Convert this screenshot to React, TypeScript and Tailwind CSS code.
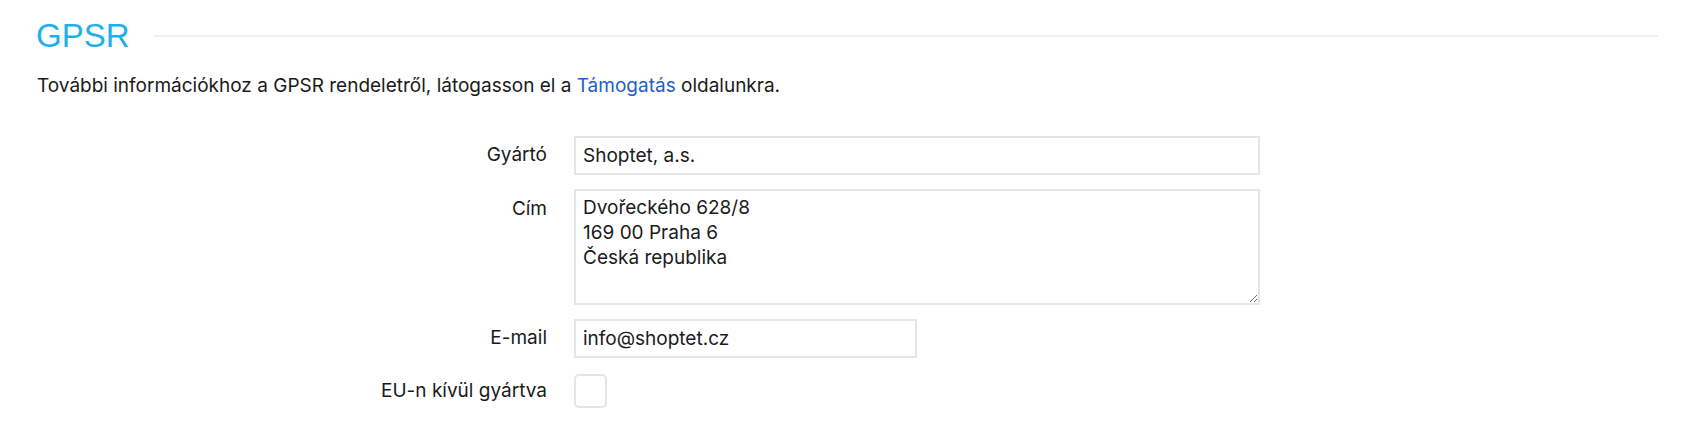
import { useState } from "react";

const FONT = "font-['Inter','Noto_Sans',sans-serif]";

function Row({ label, top, className, children }: { label: string; top?: boolean; className?: string; children: React.ReactNode }) {
  return (
    <div className={`flex gap-[27px] ${top ? "items-start" : "items-center"} ${className ?? ""}`}>
      <label className={`w-[547px] shrink-0 text-right ${top ? "pt-[6px]" : ""}`}>{label}</label>
      {children}
    </div>
  );
}

export default function App() {
  const [cim, setCim] = useState("Dvořeckého 628/8\n169 00 Praha 6\nČeská republika");
  const [outside, setOutside] = useState(false);

  return (
    <main className={`min-h-screen bg-white text-[#1a1a1a] text-[19px] ${FONT}`}>
      {/* Heading */}
      <div className="flex items-center pl-[36px] pr-[37px] pt-[16px]">
        <h2 className="font-['Liberation_Sans',Arial,sans-serif] text-[33px] leading-[40px] text-[#1eb0ec]">GPSR</h2>
        <div className="ml-[24px] h-[2px] flex-1 bg-[#f0f0f0]" />
      </div>

      <p className="mt-[17px] pl-[37px] leading-[26px]">
        További információkhoz a GPSR rendeletről, látogasson el a{" "}
        <a href="#" className="text-[#1d5fc9]">Támogatás</a> oldalunkra.
      </p>

      {/* Form */}
      <div className="mt-[37px] flex flex-col gap-[14px]">
        <Row label="Gyártó">
          <input
            defaultValue="Shoptet, a.s."
            className="h-[39px] w-[686px] border-2 border-[#e6e6e6] px-[7px] outline-none"
          />
        </Row>
        <Row label="Cím" top>
          <textarea
            value={cim}
            onChange={(e) => setCim(e.target.value)}
            className="h-[116px] w-[686px] border-2 border-[#e6e6e6] px-[7px] py-[4px] leading-[25px] outline-none"
          />
        </Row>
        <Row label="E-mail">
          <input
            defaultValue="info@shoptet.cz"
            className="h-[39px] w-[343px] border-2 border-[#e6e6e6] px-[7px] outline-none"
          />
        </Row>
        <Row label="EU-n kívül gyártva" className="mt-[2px]">
          <button
            onClick={() => setOutside(!outside)}
            className="flex h-[34px] w-[33px] items-center justify-center rounded-[5px] border-2 border-[#e6e6e6] bg-white"
          >
            {outside && <span className="text-[#1eb0ec]">✓</span>}
          </button>
        </Row>
      </div>
    </main>
  );
}
